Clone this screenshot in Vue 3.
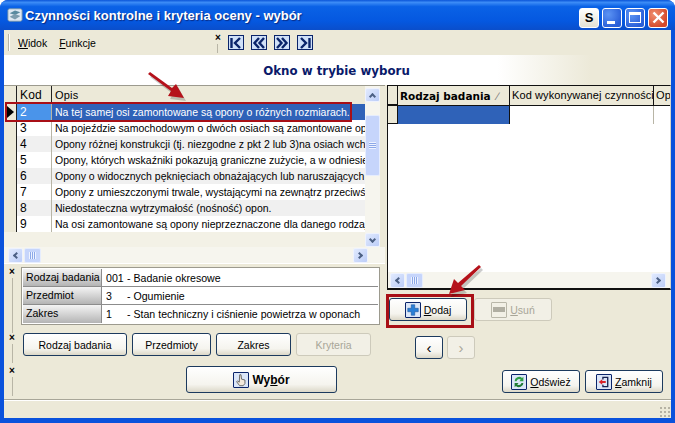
<template>
  <div class="window">
    <div class="titlebar">
      <svg class="app-icon" width="16" height="16" viewBox="0 0 18 18">
        <rect x="1" y="2" width="16" height="14" rx="2" fill="#dfe8f2" stroke="#6f8fa8" />
        <path d="M3 7 L9 4 L15 6 L9 9 Z" fill="#5a8aa0" />
        <path d="M3 11 L9 8 L15 10 L9 14 Z" fill="#7d9cae" />
      </svg>
      <span class="title-text">Czynności kontrolne i kryteria oceny - wybór</span>
      <div class="caption-btns">
        <span class="cap-btn cap-s">S</span>
        <span class="cap-btn cap-blue"><i class="min-bar"></i></span>
        <span class="cap-btn cap-blue"><i class="max-box"></i></span>
        <span class="cap-btn cap-close">
          <svg width="15" height="15" viewBox="0 0 15 15">
            <path d="M2.5 2.5 L12.5 12.5 M12.5 2.5 L2.5 12.5" stroke="#fff" stroke-width="2.4" />
          </svg>
        </span>
      </div>
    </div>

    <div class="client">
      <div class="toolbar">
        <span class="tb-grip"></span>
        <span class="menu"><u>W</u>idok</span>
        <span class="menu"><u>F</u>unkcje</span>
        <span class="tb-close">
          <b class="x-mark">×</b>
          <i class="tb-line"></i>
        </span>
        <div class="nav-icons">
          <span v-for="n in navIcons" :key="n" class="nav-icon">
            <svg width="14" height="14" viewBox="0 0 14 14">
              <path :d="n" fill="none" stroke="#0a246a" stroke-width="2.4" />
            </svg>
          </span>
        </div>
      </div>

      <div class="banner">Okno w trybie wyboru</div>

      <div class="main">
        <div class="left-col">
          <div class="list-panel">
            <div class="list-body">
              <div class="list-table">
                <div class="list-head">
                  <span class="ind"></span>
                  <span class="kod">Kod</span>
                  <span class="opis">Opis</span>
                </div>
                <div
                  v-for="(r, i) in rows"
                  :key="r.kod"
                  class="list-row"
                  :class="{ selected: i === 0, odd: i > 0 && i % 2 === 0 }"
                >
                  <span class="ind"><i v-if="i === 0" class="tri"></i></span>
                  <span class="kod">{{ r.kod }}</span>
                  <span class="opis">{{ r.opis }}</span>
                </div>
              </div>
              <div class="vscroll">
                <span class="sb-btn"><i class="chev up"></i></span>
                <span class="vgap"></span>
                <span class="vthumb"><i class="grip-h"></i></span>
                <span class="sb-track"></span>
                <span class="sb-btn"><i class="chev down"></i></span>
              </div>
            </div>
            <div class="hscroll list-scroll">
              <span class="sb-btn"><i class="chev left"></i></span>
              <span class="hthumb"><i class="grip-v"></i></span>
              <span class="sb-track"></span>
              <span class="sb-btn"><i class="chev right"></i></span>
            </div>
          </div>

          <div class="dock details-dock">
            <span class="handle"><b class="x-mark">×</b><i class="tb-line"></i></span>
            <div class="details">
              <div v-for="d in details" :key="d.label" class="detail-row">
                <span class="detail-label">{{ d.label }}</span>
                <span class="detail-code">{{ d.code }}</span>
                <span class="detail-value">{{ d.value }}</span>
              </div>
            </div>
          </div>

          <div class="dock buttons-dock">
            <span class="handle"><b class="x-mark">×</b><i class="tb-line"></i></span>
            <button class="btn w104">Rodzaj badania</button>
            <button class="btn w79">Przedmioty</button>
            <button class="btn w75">Zakres</button>
            <button class="btn w75 disabled">Kryteria</button>
          </div>

          <div class="dock select-dock">
            <span class="handle"><b class="x-mark">×</b><i class="tb-line"></i></span>
            <button class="btn btn-select">
              <span class="btn-icon">
                <svg width="16" height="16" viewBox="0 0 16 16">
                  <path d="M6.5 2 L8 2 L8.6 7 L12.5 8 L12.5 12 L10.5 14.5 L6.5 14.5 L3 10 L4 9 L6 10.5 Z" fill="#f3e9dc" stroke="#5a5a5a" />
                </svg>
              </span>
              <b>Wy<u>b</u>ór</b>
            </button>
          </div>
        </div>

        <div class="right-col">
          <div class="sub-grid">
            <div class="sub-head">
              <span class="sub-ind"></span>
              <span class="sub-c1"><b>Rodzaj badania</b><em>∕</em></span>
              <span class="sub-c2">Kod wykonywanej czynności</span>
              <span class="sub-c3">Op</span>
            </div>
            <div class="sub-row">
              <span class="sub-ind"></span>
              <span class="sub-c1 sel"></span>
              <span class="sub-c2"></span>
              <span class="sub-c3"></span>
            </div>
            <div class="sub-fill"></div>
            <div class="hscroll sub-scroll">
              <span class="sb-btn"><i class="chev left"></i></span>
              <span class="hthumb small"><i class="grip-v"></i></span>
              <span class="sb-track"></span>
              <span class="sb-btn"><i class="chev right"></i></span>
            </div>
          </div>

          <div class="add-row">
            <button class="btn w78">
              <span class="btn-icon">
                <svg width="16" height="16" viewBox="0 0 16 16">
                  <path d="M6 2 H10 V6 H14 V10 H10 V14 H6 V10 H2 V6 H6 Z" fill="#2a7fd6" stroke="#174f92" stroke-width="0.6" />
                </svg>
              </span>
              <span><u>D</u>odaj</span>
            </button>
            <button class="btn w78 disabled">
              <span class="btn-icon off"><i class="minus"></i></span>
              <span><u>U</u>suń</span>
            </button>
          </div>

          <div class="pager">
            <button class="btn w28">‹</button>
            <button class="btn w28 disabled">›</button>
          </div>

          <div class="bottom-actions">
            <button class="btn w78">
              <span class="btn-icon">
                <svg width="16" height="16" viewBox="0 0 16 16">
                  <path d="M3 7 A5 5 0 0 1 11.5 3.5 L13 2 V7 H8.5 L10 5.2 A3 3 0 0 0 5.2 7 Z" fill="#2f9e44" />
                  <path d="M13 9 A5 5 0 0 1 4.5 12.5 L3 14 V9 H7.5 L6 10.8 A3 3 0 0 0 10.8 9 Z" fill="#1f7a34" />
                </svg>
              </span>
              <span><u>O</u>dśwież</span>
            </button>
            <button class="btn w78">
              <span class="btn-icon">
                <svg width="16" height="16" viewBox="0 0 16 16">
                  <path d="M6 2 H13 V14 H6 V11 H7.5 V12.5 H11.5 V3.5 H7.5 V5 H6 Z" fill="#15204f" />
                  <path d="M2 8 L6 4.8 V6.8 H10 V9.2 H6 V11.2 Z" fill="#d8232a" />
                </svg>
              </span>
              <span><u>Z</u>amknij</span>
            </button>
          </div>
        </div>
      </div>

      <div class="statusbar">
        <span class="size-grip"></span>
      </div>
    </div>

    <span class="red-box row-box"></span>
    <span class="red-box add-box"></span>
    <svg class="arrows" width="675" height="423" viewBox="0 0 675 423">
      <g fill="#000" opacity="0.2" transform="translate(2 3)">
        <path d="M148 74 L150 72 L172 88 L176 84 L184 98 L168 96 L171 91 Z" />
        <path d="M479 265 L481 267 L461 286 L465 290 L449 294 L454 279 L458 283 Z" />
      </g>
      <path d="M148 74 L150 72 L172 88 L176 84 L184 98 L168 96 L171 91 Z" fill="#b5121b" />
      <path d="M479 265 L481 267 L461 286 L465 290 L449 294 L454 279 L458 283 Z" fill="#b5121b" />
    </svg>
  </div>
</template>

<script setup>
const navIcons = [
  "M2.5 2 V12 M11 2 L6 7 L11 12",
  "M7 2 L2.5 7 L7 12 M12 2 L7.5 7 L12 12",
  "M2 2 L6.5 7 L2 12 M7 2 L11.5 7 L7 12",
  "M3 2 L8 7 L3 12 M11.5 2 V12",
];

const rows = [
  { kod: "2", opis: "Na tej samej osi zamontowane są opony o różnych rozmiarach." },
  { kod: "3", opis: "Na pojeździe samochodowym o dwóch osiach są zamontowane opony" },
  { kod: "4", opis: "Opony różnej konstrukcji (tj. niezgodne z pkt 2 lub 3)na osiach wchodzących" },
  { kod: "5", opis: "Opony, których wskaźniki pokazują graniczne zużycie, a w odniesieniu" },
  { kod: "6", opis: "Opony o widocznych pęknięciach obnażających lub naruszających" },
  { kod: "7", opis: "Opony z umieszczonymi trwale, wystającymi na zewnątrz przeciwślizgowymi" },
  { kod: "8", opis: "Niedostateczna wytrzymałość (nośność) opon." },
  { kod: "9", opis: "Na osi zamontowane są opony nieprzeznaczone dla danego rodzaju" },
];

const details = [
  { label: "Rodzaj badania", code: "001", value: "- Badanie okresowe" },
  { label: "Przedmiot", code: "3", value: "- Ogumienie" },
  { label: "Zakres", code: "1", value: "- Stan techniczny i ciśnienie powietrza w oponach" },
];
</script>

<style>
html,
body {
  margin: 0;
  overflow: hidden;
}
</style>

<style scoped>
.window {
  position: relative;
  width: 675px;
  height: 423px;
  display: flex;
  flex-direction: column;
  box-sizing: border-box;
  background: #0a52dc;
  border-radius: 8px 8px 0 0;
  font-family: "Liberation Sans", Arial, sans-serif;
  font-size: 10.5px;
  color: #000;
  overflow: hidden;
}

.titlebar {
  height: 30px;
  flex: none;
  display: flex;
  align-items: center;
  padding: 0 7px 0 7px;
  background: linear-gradient(180deg, #0a55d8 0%, #3c8cf6 8%, #0a62e6 22%, #0558e0 70%, #0a4ecb 100%);
}

.app-icon {
  margin-right: 2px;
}

.title-text {
  color: #fff;
  font-family: "Liberation Sans", Arial, sans-serif;
  font-weight: 700;
  font-size: 13px;
  text-shadow: 1px 1px 1px #0a2a80;
}

.caption-btns {
  margin-left: auto;
  display: flex;
  gap: 3px;
  margin-top: 5px;
}

.cap-btn {
  width: 20px;
  height: 20px;
  box-sizing: border-box;
  border: 1px solid #fff;
  border-radius: 3px;
  display: flex;
  align-items: center;
  justify-content: center;
  position: relative;
}

.cap-s {
  background: linear-gradient(180deg, #fff, #e4e2d4);
  font-weight: 700;
  font-size: 13px;
  color: #000;
}

.cap-blue {
  background: radial-gradient(circle at 30% 30%, #5c94f4, #2a5fd8 75%);
}

.cap-close {
  background: radial-gradient(circle at 30% 30%, #f09070, #d5482a 75%);
}

.min-bar {
  position: absolute;
  left: 4px;
  bottom: 3px;
  width: 8px;
  height: 3px;
  background: #fff;
}

.max-box {
  width: 12px;
  height: 11px;
  box-sizing: border-box;
  border: 1px solid #fff;
  border-top-width: 3px;
}

.client {
  flex: 1;
  min-height: 0;
  margin: 0 4px 5px;
  display: flex;
  flex-direction: column;
  background: #ece9d8;
}

.toolbar {
  height: 25px;
  flex: none;
  display: flex;
  align-items: center;
  padding-left: 4px;
}

.tb-grip {
  width: 1px;
  height: 17px;
  margin-right: 9px;
  background: #b8b5a6;
  box-shadow: 1px 0 0 #fff;
}

.menu {
  margin-right: 12px;
}

.tb-close {
  margin-left: 103px;
  width: 14px;
  height: 20px;
  display: flex;
  flex-direction: column;
  align-items: center;
  margin-right: 3px;
}

.x-mark {
  font-size: 10px;
  line-height: 9px;
  font-weight: 700;
}

.tb-line {
  flex: 1;
  width: 1px;
  margin-top: 2px;
  background: #b8b5a6;
}

.nav-icons {
  display: flex;
  gap: 7px;
}

.nav-icon {
  width: 16px;
  height: 15px;
  box-sizing: border-box;
  border: 1px solid #0a246a;
  background: #cfe0f8;
  display: flex;
  align-items: center;
  justify-content: center;
}

.banner {
  height: 30px;
  flex: none;
  display: flex;
  align-items: center;
  justify-content: center;
  padding-top: 2px;
  padding-right: 2px;
  box-sizing: border-box;
  background: linear-gradient(90deg, #fff 0%, #fff 74%, #ece9d8 88%);
  color: #0a1a6a;
  font-family: "DejaVu Sans", sans-serif;
  font-weight: 700;
  font-size: 11.8px;
}

.main {
  flex: 1;
  min-height: 0;
  display: grid;
  grid-template-columns: 381px 284px;
  column-gap: 2px;
}

.left-col,
.right-col {
  display: flex;
  flex-direction: column;
  min-height: 0;
}

.list-panel {
  height: 179px;
  flex: none;
  box-sizing: border-box;
  border-top: 1px solid #9c9a8e;
  border-bottom: 1px solid #fff;
  display: flex;
  flex-direction: column;
}

.list-body {
  flex: 1;
  min-height: 0;
  display: flex;
}

.list-table {
  width: 361px;
  flex: none;
  background: #f3f1e6;
}

.list-head,
.list-row {
  display: flex;
  align-items: center;
  height: 16px;
  overflow: hidden;
  white-space: nowrap;
}

.list-head {
  height: 18px;
  background: #ece9d8;
  font-size: 11px;
  letter-spacing: 0.2px;
}

.list-row {
  background: #fff;
}

.list-row.odd {
  background: #f0f0f0;
}

.list-row.selected {
  background: #2f62b8;
  color: #fff;
  height: 16px;
}

.ind {
  width: 13px;
  flex: none;
  align-self: stretch;
  background: #ece9d8;
  display: flex;
  align-items: center;
  padding-left: 3px;
  box-sizing: border-box;
  border-right: 1px solid #222;
}

.tri {
  width: 0;
  height: 0;
  border-left: 7px solid #000;
  border-top: 6px solid transparent;
  border-bottom: 6px solid transparent;
}

.kod {
  width: 35px;
  flex: none;
  align-self: stretch;
  line-height: 16px;
  padding-left: 3px;
  box-sizing: border-box;
  border-right: 1px solid #b8b5a6;
  font-size: 12px;
}

.list-head .kod {
  border-right-color: #222;
  line-height: 18px;
}

.selected .kod {
  background: #4a94ea;
}

.opis {
  padding-left: 3px;
  flex: 1;
  min-width: 0;
  overflow: hidden;
}

.vscroll {
  width: 15px;
  flex: none;
  padding-top: 2px;
  box-sizing: border-box;
  display: flex;
  flex-direction: column;
  background: #f6f5ee;
}

.vscroll .sb-btn {
  height: 14px;
}

.vgap {
  height: 13px;
  flex: none;
}

.vthumb {
  height: 61px;
  flex: none;
  background: #c6d5fb;
  box-sizing: border-box;
  border: 1px solid #e6edfd;
  border-radius: 2px;
  display: flex;
  align-items: center;
  justify-content: center;
}

.grip-h {
  width: 7px;
  height: 7px;
  background: repeating-linear-gradient(180deg, #eef3ff 0 1px, #8ca8e8 1px 2px);
}

.grip-v {
  width: 7px;
  height: 7px;
  background: repeating-linear-gradient(90deg, #eef3ff 0 1px, #8ca8e8 1px 2px);
}

.sb-track {
  flex: 1;
  min-width: 0;
  min-height: 0;
}

.sb-btn {
  width: 15px;
  height: 15px;
  flex: none;
  box-sizing: border-box;
  background: linear-gradient(135deg, #e1eafe, #bccdf8);
  border: 1px solid #eef2fe;
  border-radius: 2px;
  display: flex;
  align-items: center;
  justify-content: center;
}

.chev {
  width: 5px;
  height: 5px;
  box-sizing: border-box;
  border-left: 2px solid #4d6185;
  border-top: 2px solid #4d6185;
}

.chev.up {
  transform: translateY(1px) rotate(45deg);
}

.chev.down {
  transform: translateY(-1px) rotate(225deg);
}

.chev.left {
  transform: translateX(1px) rotate(-45deg);
}

.chev.right {
  transform: translateX(-1px) rotate(135deg);
}

.hscroll {
  height: 16px;
  flex: none;
  display: flex;
  align-items: center;
  padding: 0 4px 0 9px;
  background: #f6f5ee;
}

.list-scroll {
  padding: 0 17px 0 4px;
}

.hthumb {
  width: 17px;
  height: 15px;
  margin-left: 1px;
  box-sizing: border-box;
  background: #c6d5fb;
  border: 1px solid #e6edfd;
  border-radius: 2px;
  display: flex;
  align-items: center;
  justify-content: center;
}

.dock {
  display: flex;
  flex: none;
}

.handle {
  width: 16px;
  margin-right: 1px;
  flex: none;
  display: flex;
  flex-direction: column;
  align-items: center;
}

.details-dock {
  height: 69px;
  padding-top: 3px;
  box-sizing: border-box;
}

.details {
  width: 359px;
  height: 58px;
  box-sizing: border-box;
  border: 1px solid #9c9a8e;
  background: #fff;
  padding: 1px;
  font-size: 10.6px;
}

.detail-row {
  display: flex;
  height: 18px;
  align-items: center;
  border-bottom: 1px solid #8c8c8c;
  box-sizing: border-box;
}

.detail-row:last-child {
  border-bottom: none;
}

.detail-label {
  width: 79px;
  flex: none;
  align-self: stretch;
  line-height: 17px;
  padding-left: 3px;
  box-sizing: border-box;
  background: linear-gradient(180deg, #f4f4f4, #b4b4b4);
  border-right: 1px solid #8c8c8c;
  white-space: nowrap;
}

.detail-code {
  width: 25px;
  flex: none;
  padding-left: 4px;
  box-sizing: border-box;
}

.detail-value {
  white-space: nowrap;
}

.buttons-dock {
  height: 33px;
  gap: 5px;
  align-items: flex-start;
}

.buttons-dock .handle {
  margin-right: -2px;
  height: 30px;
}

.btn {
  height: 23px;
  box-sizing: border-box;
  padding: 0;
  border: 1px solid #1c3a5e;
  border-radius: 3px;
  background: linear-gradient(180deg, #fff 0%, #f5f4ee 70%, #dcd8c8 100%);
  font-family: inherit;
  font-size: 10.5px;
  color: #000;
  display: inline-flex;
  align-items: center;
  justify-content: center;
  gap: 3px;
}

.btn.disabled {
  border-color: #cdcabb;
  background: #f2f0e6;
  color: #a8a698;
}

.w104 {
  width: 104px;
}

.w79 {
  width: 79px;
}

.w75 {
  width: 75px;
}

.w78 {
  width: 78px;
}

.w28 {
  width: 28px;
  font-size: 15px;
}

.select-dock {
  height: 32px;
}

.btn-select {
  width: 151px;
  height: 27px;
  margin-left: 166px;
  font-size: 12px;
}

.select-dock .handle {
  height: 30px;
  margin-right: 0;
}

.btn-icon {
  width: 16px;
  height: 16px;
  flex: none;
  box-sizing: border-box;
  border: 1px solid #0a246a;
  background: #dbe6f8;
  display: flex;
  align-items: center;
  justify-content: center;
  border-radius: 1px;
}

.btn-icon svg {
  flex: none;
  width: 14px;
  height: 14px;
}

.btn-icon.off {
  border-color: #b9b7a9;
  background: #f2f0e6;
}

.minus {
  width: 12px;
  height: 5px;
  background: #b0aea2;
}

.sub-grid {
  height: 205px;
  flex: none;
  box-sizing: border-box;
  border-left: 1px solid #111;
  border-top: 1px solid #111;
  border-bottom: 2px solid #111;
  border-right: 1px solid #d8d6c8;
  background: #fff;
  display: flex;
  flex-direction: column;
}

.sub-head,
.sub-row {
  display: flex;
  flex: none;
}

.sub-head {
  height: 19px;
  background: #ece9d8;
  border-bottom: 1px solid #111;
  white-space: nowrap;
  overflow: hidden;
  font-size: 11px;
  letter-spacing: 0.1px;
}

.sub-row {
  height: 18px;
}

.sub-ind {
  width: 9px;
  flex: none;
  background: #ece9d8;
  border-right: 1px solid #111;
  border-bottom: 1px solid #111;
}

.sub-c1 {
  width: 112px;
  flex: none;
  padding-left: 2px;
  box-sizing: border-box;
  border-right: 1px solid #111;
  display: flex;
  align-items: center;
  gap: 6px;
  letter-spacing: 0;
}

.sub-c1 b {
  font-family: "DejaVu Sans", sans-serif;
  font-size: 10.5px;
}

.sub-c1 em {
  color: #777;
  font-style: normal;
}

.sub-c1.sel {
  background: #2f62b8;
}

.sub-c2 {
  width: 144px;
  flex: none;
  padding-left: 2px;
  box-sizing: border-box;
  border-right: 1px solid #b8b5a6;
  line-height: 18px;
  overflow: hidden;
}

.sub-head .sub-c2 {
  border-right-color: #111;
}

.sub-c3 {
  padding-left: 2px;
  line-height: 18px;
}

.sub-fill {
  flex: 1;
}

.sub-scroll {
  padding: 0 4px 0 2px;
}

.add-row {
  flex: none;
  display: flex;
  gap: 7px;
  padding: 8px 0 0 2px;
}

.pager {
  flex: none;
  display: flex;
  gap: 4px;
  padding: 15px 0 0 28px;
}

.bottom-actions {
  flex: none;
  display: flex;
  gap: 5px;
  padding: 11px 0 0 115px;
}

.statusbar {
  height: 18px;
  flex: none;
  position: relative;
  border-top: 1px solid #a8a698;
  box-shadow: inset 0 1px 0 #fff;
  background: #ece9d8;
}

.size-grip {
  position: absolute;
  right: 0;
  bottom: 0;
  width: 12px;
  height: 12px;
  background-image: radial-gradient(circle, #b5b2a4 1px, transparent 1px);
  background-size: 4px 4px;
}

.red-box {
  position: absolute;
  box-sizing: border-box;
  border: 2px solid #a80f16;
  pointer-events: none;
}

.row-box {
  left: 5px;
  top: 102px;
  width: 347px;
  height: 20px;
}

.add-box {
  left: 386px;
  top: 294px;
  width: 88px;
  height: 34px;
  border-width: 3px;
}

.arrows {
  position: absolute;
  left: 0;
  top: 0;
  pointer-events: none;
}
</style>
